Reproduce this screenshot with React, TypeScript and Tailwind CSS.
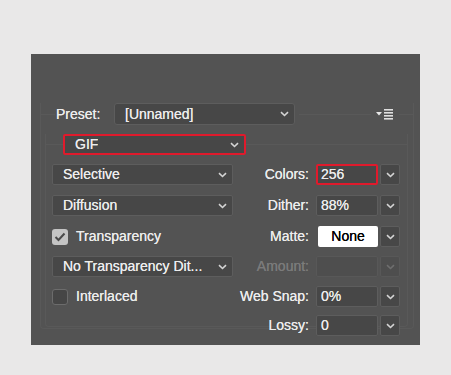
function Chevron({ dim = false }: { dim?: boolean }) {
  return (
    <svg width="9" height="6" viewBox="0 0 9 6" className="shrink-0">
      <path d="M1 1.2 L4.5 4.5 L8 1.2" fill="none" stroke={dim ? '#6e6e6e' : '#d4d4d4'} strokeWidth="1.6" />
    </svg>
  );
}

function Select({ label, width, highlight = false }: { label: string; width: string; highlight?: boolean }) {
  return (
    <div
      className={`flex h-[21px] ${width} items-center justify-between rounded-[2px] bg-[#474747] pl-[10px] pr-[5px] ${
        highlight ? 'border-2 border-[#e01a2c]' : 'border border-[#5d5d5d]'
      }`}
    >
      <span className="truncate">{label}</span>
      <Chevron />
    </div>
  );
}

function Field({
  label,
  value,
  red = false,
  white = false,
  disabled = false,
}: {
  label: string;
  value: string;
  red?: boolean;
  white?: boolean;
  disabled?: boolean;
}) {
  let box = 'border border-[#5d5d5d] bg-[#474747] pl-[4px]';
  if (red) box = 'border-2 border-[#e01a2c] bg-[#474747] pl-[3px]';
  if (white) box = 'ml-[2px] w-[60px] justify-center bg-white text-black';
  if (disabled) box = 'border border-[#585858] bg-[#4e4e4e]';
  return (
    <div className="flex items-center">
      <span className={`mr-[7px] ${disabled ? 'text-[#7b7b7b]' : ''}`}>{label}</span>
      <div className={`flex h-[21px] items-center rounded-[2px] ${white ? '' : 'w-[62px]'} ${box}`}>{value}</div>
      <div
        className={`ml-[2px] flex h-[21px] w-[20px] items-center justify-center rounded-[2px] border ${
          disabled ? 'border-[#585858] bg-[#4e4e4e]' : 'border-[#5d5d5d] bg-[#474747]'
        }`}
      >
        <Chevron dim={disabled} />
      </div>
    </div>
  );
}

function Check({ on, label }: { on: boolean; label: string }) {
  return (
    <div className="flex items-center">
      <div
        className={`flex h-[16px] w-[16px] items-center justify-center rounded-[3px] ${
          on ? 'bg-[#c4c4c4]' : 'border border-[#6c6c6c] bg-[#464646]'
        }`}
      >
        {on && (
          <svg width="12" height="10" viewBox="0 0 12 10">
            <path d="M1.5 5 L4.5 8 L10.5 1.5" fill="none" stroke="#4a4a4a" strokeWidth="2" />
          </svg>
        )}
      </div>
      <span className="ml-[8px]">{label}</span>
    </div>
  );
}

function MenuIcon() {
  return (
    <svg width="20" height="12" viewBox="0 0 20 12" className="shrink-0">
      <path d="M1 4 L7 4 L4 7.5 Z" fill="#e8e8e8" />
      <rect x="9" y="1" width="9" height="1.6" fill="#e0e0e0" />
      <rect x="9" y="4" width="9" height="1.6" fill="#e0e0e0" />
      <rect x="9" y="7" width="9" height="1.6" fill="#e0e0e0" />
      <rect x="9" y="10" width="9" height="1.6" fill="#e0e0e0" />
    </svg>
  );
}

export default function App() {
  return (
    <div
      className="h-[375px] w-[451px] bg-[#e9e8e8] pl-[31px] pt-[54px] text-[14px] text-[#ececec] [text-shadow:0_0_0.5px_currentColor]"
      style={{ fontFamily: '"Liberation Sans", Arial, sans-serif' }}
    >
      <div className="h-[291px] w-[389px] bg-[#535353] pt-[60px]">
        <div className="ml-[9px] mr-[6px] h-[226px] rounded-b-[4px] border-x border-b border-[#595959]">
          <div className="-mt-[11px] flex h-[22px] items-center">
            <div className="h-px w-[14px] bg-[#595959]" />
            <span className="ml-[1px] w-[58px]">Preset:</span>
            <div className="flex h-[22px] w-[181px] items-center justify-between rounded-[3px] border border-[#5d5d5d] bg-[#474747] pl-[10px] pr-[5px]">
              <span>[Unnamed]</span>
              <Chevron />
            </div>
            <div className="mx-[4px] h-px flex-1 bg-[#595959]" />
            <MenuIcon />
            <div className="ml-[4px] h-px w-[14px] bg-[#595959]" />
          </div>

          <div className="ml-[4px] mr-[5px] mt-[20px] h-[193px] rounded-b-[4px] border-x border-b border-[#595959]">
            <div className="-mt-[11px] flex h-[21px] items-center">
              <div className="h-px w-[17px] bg-[#595959]" />
              <Select label="GIF" width="w-[183px]" highlight />
              <div className="h-px flex-1 bg-[#595959]" />
            </div>

            <div className="mt-[9px] flex flex-col gap-[9px] pl-[6px] pr-[7px]">
              <div className="flex h-[21px] items-center justify-between">
                <Select label="Selective" width="w-[181px]" />
                <Field label="Colors:" value="256" red />
              </div>
              <div className="mt-[1px] flex h-[21px] items-center justify-between">
                <Select label="Diffusion" width="w-[181px]" />
                <Field label="Dither:" value="88%" />
              </div>
              <div className="mt-[1px] flex h-[21px] items-center justify-between">
                <Check on label="Transparency" />
                <Field label="Matte:" value="None" white />
              </div>
              <div className="flex h-[21px] items-center justify-between">
                <Select label="No Transparency Dit..." width="w-[181px]" />
                <Field label="Amount:" value="" disabled />
              </div>
              <div className="flex h-[21px] items-center justify-between">
                <Check on={false} label="Interlaced" />
                <Field label="Web Snap:" value="0%" />
              </div>
              <div className="-mt-[1px] flex h-[21px] items-center justify-end">
                <Field label="Lossy:" value="0" />
              </div>
            </div>
          </div>
        </div>
      </div>
    </div>
  );
}
